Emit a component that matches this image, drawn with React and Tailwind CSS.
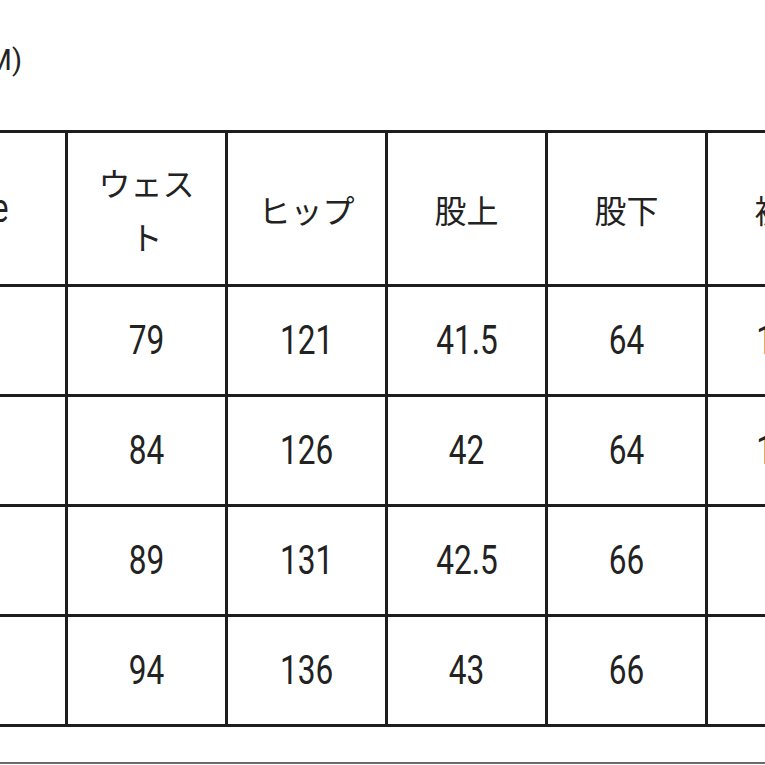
import React from 'react';

// size chart, cropped: first column starts off-screen
const headers = ['Size', 'ウェスト', 'ヒップ', '股上', '股下', '裾幅'];
const rows = [
  ['S', '79', '121', '41.5', '64', '18.5'],
  ['M', '84', '126', '42', '64', '19.5'],
  ['L', '89', '131', '42.5', '66', '20'],
  ['XL', '94', '136', '43', '66', '21'],
];

const colWidths = ['w-[158px] pr-[16px]', 'w-[160px]', 'w-[160px]', 'w-[160px]', 'w-[160px]', 'w-[160px]'];

function Num({ children }) {
  return (
    <span className="inline-block scale-x-[0.79] font-['Roboto','Noto_Sans_CJK_JP',sans-serif] text-[40px] leading-none">
      {children}
    </span>
  );
}

function HeaderCell({ label, i }) {
  const isLatin = /^[A-Za-z]+$/.test(label);
  const pad = i === 0 ? 'w-[158px] pl-0 pr-[16px]' : 'w-[160px] px-4';
  return (
    <div className={`${pad} h-full shrink-0 flex items-center justify-center text-center border-r-[3px] border-b-[3px] border-[#1d1d1d]`}>
      {isLatin ? (
        <Num>{label}</Num>
      ) : (
        <span className="font-['Noto_Sans_CJK_JP',sans-serif] text-[32px] leading-[54px]">{label}</span>
      )}
    </div>
  );
}

export default function App() {
  return (
    <div className="w-[765px] h-[765px] overflow-hidden bg-white text-[#222]">
      <div className="ml-[-93px] w-[960px]">
        <div className="h-[130px] flex items-center pb-[10px]">
          <div className="w-[115px] text-right font-['Roboto',sans-serif] text-[29px] leading-none">
            (CM)
          </div>
        </div>

        <div className="border-t-[3px] border-l-[3px] border-[#1d1d1d]">
          <div className="flex h-[154px]">
            {headers.map((h, i) => (
              <HeaderCell key={h} label={h} i={i} />
            ))}
          </div>
          {rows.map((r) => (
            <div key={r[0]} className="flex h-[110px]">
              {r.map((v, i) => (
                <div
                  key={i}
                  className={`${colWidths[i]} h-full shrink-0 flex items-center justify-center border-r-[3px] border-b-[3px] border-[#1d1d1d]`}
                >
                  <Num>{v}</Num>
                </div>
              ))}
            </div>
          ))}
        </div>

        <div className="mt-[35px] h-[2px] bg-[#6b6b6b]" />
      </div>
    </div>
  );
}
